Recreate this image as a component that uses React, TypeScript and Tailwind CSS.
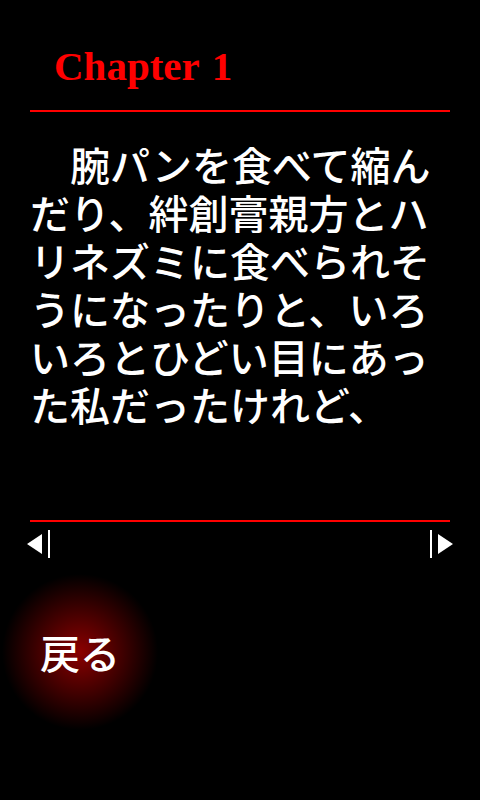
const pageText =
  '　腕パンを食べて縮んだり、絆創膏親方とハリネズミに食べられそうになったりと、いろいろとひどい目にあった私だったけれど、';

export default function App() {
  return (
    <div className="flex min-h-screen flex-col bg-black px-[30px] font-['Noto_Sans_CJK_JP',sans-serif] text-white">
      <h1 className="flex gap-3 pt-[42px] pl-6 font-['Liberation_Serif',serif] text-[41px] leading-[48px] font-bold text-[#ff0000]">
        <span>Chapter</span> <span>1</span>
      </h1>

      <main className="mt-5 min-h-[412px] border-y-2 border-[#ff0000] pt-7">
        <p className="text-[40px] leading-[48px] font-medium break-all">{pageText}</p>
      </main>

      {/* Page turning */}
      <nav className="-mx-[3px] mt-2 flex justify-between">
        <button type="button" aria-label="前のページ">
          <svg width="24" height="28" fill="white" aria-hidden="true">
            <path d="M0 14 15 4v20zM21 0h2v28h-2z" />
          </svg>
        </button>
        <button type="button" aria-label="次のページ">
          <svg width="24" height="28" fill="white" aria-hidden="true">
            <path d="M24 14 9 4v20zM1 0h2v28H1z" />
          </svg>
        </button>
      </nav>

      <button
        type="button"
        className="mt-4 -ml-7 size-[156px] rounded-full bg-[radial-gradient(closest-side,#8b0000,#000000)] text-[40px] leading-[48px] font-medium"
      >
        戻る
      </button>
    </div>
  );
}
